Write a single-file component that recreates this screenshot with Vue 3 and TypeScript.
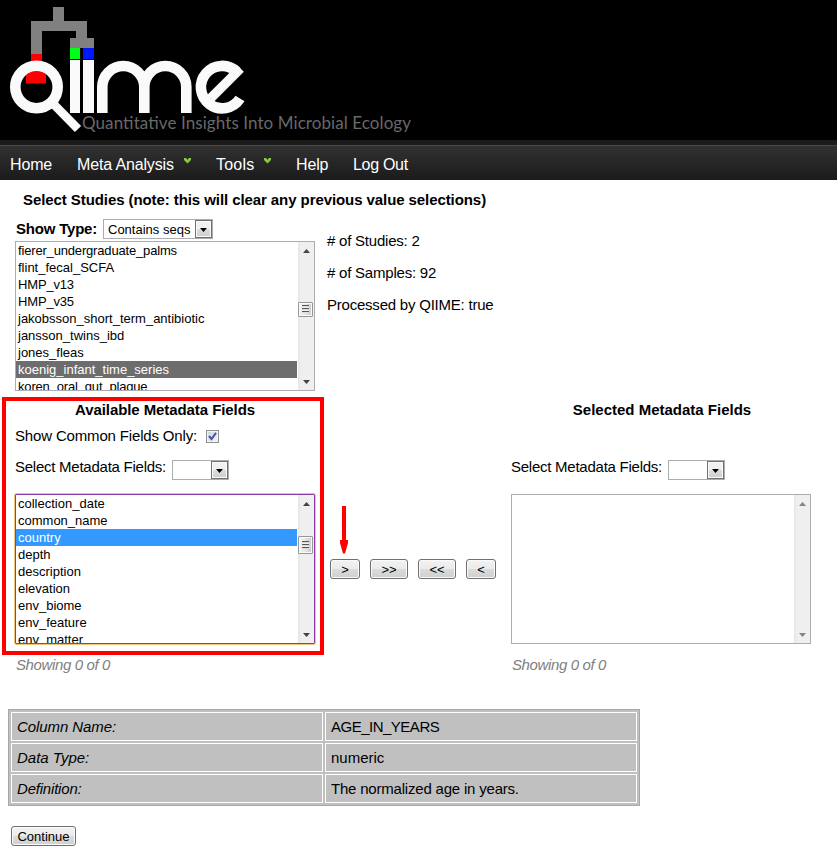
<script setup lang="ts">
import { ref } from 'vue'

interface NavItem { label: string; menu: boolean; name: string }
interface TransferButton { label: string; name: string }
interface DetailRow { label: string; value: string; name: string }

const nav: NavItem[] = [
  { label: 'Home', menu: false, name: 'home' },
  { label: 'Meta Analysis', menu: true, name: 'meta' },
  { label: 'Tools', menu: true, name: 'tools' },
  { label: 'Help', menu: false, name: 'help' },
  { label: 'Log Out', menu: false, name: 'logout' },
]

const studies: string[] = [
  'fierer_undergraduate_palms',
  'flint_fecal_SCFA',
  'HMP_v13',
  'HMP_v35',
  'jakobsson_short_term_antibiotic',
  'jansson_twins_ibd',
  'jones_fleas',
  'koenig_infant_time_series',
  'koren_oral_gut_plaque',
]
const tightNames = new Set<string>(['fierer_undergraduate_palms', 'HMP_v13', 'HMP_v35', 'koren_oral_gut_plaque'])
const fields: string[] = [
  'collection_date',
  'common_name',
  'country',
  'depth',
  'description',
  'elevation',
  'env_biome',
  'env_feature',
  'env_matter',
]
const study = ref('koenig_infant_time_series')
const field = ref('country')
const commonOnly = ref(true)

const transfers: TransferButton[] = [
  { label: '>', name: 'single' },
  { label: '>>', name: 'double' },
  { label: '<<', name: 'double' },
  { label: '<', name: 'single' },
]

const details: DetailRow[] = [
  { label: 'Column Name:', value: 'AGE_IN_YEARS', name: 'column' },
  { label: 'Data Type:', value: 'numeric', name: 'type' },
  { label: 'Definition:', value: 'The normalized age in years.', name: 'definition' },
]
</script>

<template>
  <div class="page">
    <header class="banner">
      <svg class="logo" width="430" height="140" viewBox="0 0 430 140">
        <g fill="#808080">
          <rect x="53" y="7" width="11" height="15" />
          <path d="M31 21H87V38H94V48H70V38H76V31H42V55H31Z" />
        </g>
        <rect x="31" y="54" width="11" height="8" fill="#f00" />
        <rect x="26" y="67" width="20" height="16.500" fill="#f00" />
        <rect x="70" y="48" width="10" height="11" fill="#00ff18" />
        <rect x="83" y="48" width="11" height="11" fill="#0018ff" />
        <g fill="none" stroke="#fafafa" stroke-width="10.6">
          <circle cx="36.5" cy="87" r="21.2" />
          <path d="M51 101.500L78 129" stroke-width="8.800" />
          <path d="M102.300 113V87A21 21 0 0 1 144.300 87V113M144.300 87A21 21 0 0 1 186.300 87V113" />
          <path d="M237 72A21.200 21.200 0 1 0 240 98.500" />
          <path d="M210.500 98.300L240.500 68.500" stroke-width="9.500" />
        </g>
        <g fill="#fafafa">
          <rect x="70" y="60" width="10" height="53" />
          <rect x="83" y="60" width="11" height="53" />
        </g>
        <text class="tagline" x="82" y="129" textLength="329">Quantitative Insights Into Microbial Ecology</text>
      </svg>
    </header>
    <nav class="nav">
      <a v-for="item in nav" :key="item.name" class="nav-item" :class="item.name">
        <span class="nav-label">{{ item.label }}</span>
        <svg v-if="item.menu" class="chevron" width="7" height="6" viewBox="0 0 7 6">
          <path d="M0 0H2L3.500 1.700L5 0H7V2L3.500 5.500L0 2Z" fill="#8cc63a" />
        </svg>
      </a>
    </nav>

    <main>
      <h2 class="heading">Select Studies (note: this will clear any previous value selections)</h2>
      <section class="studies">
        <div class="picker">
          <div class="type-row">
            <strong class="type-label">Show Type:</strong>
            <div class="combo wide"><span>Contains seqs</span><i class="drop"></i></div>
          </div>
          <div class="listbox">
            <ul class="options">
              <li
                v-for="name in studies"
                :key="name"
                :class="{ inactive: name === study, tight: tightNames.has(name) }"
                @click="study = name"
              >{{ name }}</li>
            </ul>
            <div class="scroll"><i class="up"></i><i class="thumb high"></i><i class="down"></i></div>
          </div>
        </div>
        <div class="facts">
          <p># of Studies: 2</p>
          <p># of Samples: 92</p>
          <p>Processed by QIIME: true</p>
        </div>
      </section>

      <section class="metadata">
        <div class="available">
          <h3>Available Metadata Fields</h3>
          <div class="check-row" @click="commonOnly = !commonOnly">
            <span class="check-label">Show Common Fields Only:</span>
            <span class="check">
              <svg v-if="commonOnly" width="9" height="9" viewBox="0 0 9 9">
                <path d="M1 4L3.500 7L8 0.800" fill="none" stroke="#4258a0" stroke-width="2" />
              </svg>
            </span>
          </div>
          <div class="field-row">
            <span class="field-label">Select Metadata Fields:</span>
            <div class="combo"><span></span><i class="drop"></i></div>
          </div>
          <div class="listbox focused">
            <ul class="options">
              <li v-for="name in fields" :key="name" :class="{ active: name === field }" @click="field = name">{{ name }}</li>
            </ul>
            <div class="scroll"><i class="up"></i><i class="thumb low"></i><i class="down"></i></div>
          </div>
        </div>
        <div class="transfer">
          <svg class="arrow" width="8" height="48" viewBox="0 0 8 48">
            <path d="M2 0H6V34H8V37L5 47.500H3L0 37V34H2Z" fill="#f00" />
          </svg>
          <div class="buttons">
            <button v-for="b in transfers" :key="b.label" type="button" class="btn" :class="b.name">{{ b.label }}</button>
          </div>
        </div>
        <div class="selected">
          <h3>Selected Metadata Fields</h3>
          <div class="field-row">
            <span class="field-label">Select Metadata Fields:</span>
            <div class="combo"><span></span><i class="drop"></i></div>
          </div>
          <div class="listbox">
            <ul class="options"></ul>
            <div class="scroll faded"><i class="up"></i><i class="down"></i></div>
          </div>
        </div>
      </section>
      <div class="counts">
        <em>Showing 0 of 0</em>
        <em>Showing 0 of 0</em>
      </div>

      <div class="details">
        <template v-for="row in details" :key="row.name">
          <div class="cell"><em :class="row.name">{{ row.label }}</em></div>
          <div class="cell"><span :class="row.name">{{ row.value }}</span></div>
        </template>
      </div>
      <button type="button" class="btn continue">Continue</button>
    </main>
  </div>
</template>

<style>
body {
  margin: 0;
  background: #fff;
}
</style>

<style scoped>
.page {
  width: 837px;
  height: 858px;
  overflow: hidden;
  font: 15px/20px 'Liberation Sans', Arial, sans-serif;
  color: #000;
  background: #fff;
}
.page * { box-sizing: border-box; }
.banner { height: 140px; background: #000; }
.logo { display: block; }
.tagline { font: 17px Lato, sans-serif; fill: #686868; }
.nav {
  display: flex;
  height: 40px;
  padding: 10px 0 0 10px;
  border-top: 5px solid #1b1b1b;
  box-shadow: inset 0 1px #484848;
  background: linear-gradient(#323232, #1b1b1b);
  font-size: 16px;
  color: #fff;
}
.nav-item { display: flex; white-space: nowrap; }
.nav-label { letter-spacing: -0.15px; }
.home { width: 67px; }
.meta { width: 139px; }
.meta .nav-label { width: 107px; }
.tools { width: 80px; }
.tools .nav-label { width: 48px; letter-spacing: 0.2px; }
.help { width: 57px; }
.logout .nav-label { letter-spacing: -0.3px; }
.chevron { margin-top: 3px; }
h2, h3, p, ul { margin: 0; padding: 0; }
.heading {
  height: 39px;
  padding: 10px 0 0 23px;
  font-size: 15px;
  line-height: 20px;
  letter-spacing: -0.08px;
  white-space: nowrap;
}
.studies { display: flex; height: 178px; padding-left: 15px; }
.picker { width: 300px; }
.type-row { display: flex; height: 22px; gap: 6px; padding-left: 1px; }
.type-label { width: 81px; letter-spacing: -0.2px; white-space: nowrap; }
.combo {
  display: flex;
  justify-content: space-between;
  width: 57px;
  height: 20px;
  border: 1px solid #abadb3;
  background: #fff;
}
.combo.wide { width: 110px; }
.combo span { padding-left: 4px; font-size: 13px; line-height: 19px; white-space: nowrap; }
.drop {
  display: flex;
  justify-content: center;
  width: 17px;
  height: 18px;
  border: 1px solid #707070;
  box-shadow: inset 0 0 0 1px #fafafa;
  background: linear-gradient(#f0f0f0 48%, #dcdcdc 52%, #cfcfcf);
}
.drop::after {
  content: '';
  width: 7px;
  height: 4px;
  margin-top: 7px;
  background: #000;
  clip-path: polygon(0 0, 100% 0, 50% 100%);
}
.listbox { display: flex; width: 300px; height: 150px; border: 1px solid #abadb3; background: #fff; }
.listbox.focused { border-color: #8a3ba6; outline: 1px solid #f1c578; border-radius: 1px; }
.options { flex: 1; overflow: hidden; list-style: none; font-size: 13px; }
.options li { height: 17px; padding-left: 2px; line-height: 17px; white-space: nowrap; }
.options .tight { letter-spacing: -0.17px; }
.options .inactive { color: #fff; background: #6d6d6d; }
.options .active { color: #fff; background: #3399ff; }
.scroll {
  position: relative;
  width: 17px;
  background: linear-gradient(90deg, #fff 1px, #e5e5e5 1px, #efefef 4px, #f0f0f0);
}
.up, .down { position: absolute; left: 6px; width: 7px; height: 4px; background: #444; }
.up { top: 7px; clip-path: polygon(50% 0, 100% 100%, 0 100%); }
.down { bottom: 6px; clip-path: polygon(0 0, 100% 0, 50% 100%); }
.faded .up, .faded .down { background: #848484; }
.thumb {
  position: absolute;
  left: 0;
  width: 15px;
  border: 1px solid #979797;
  border-radius: 1px;
  box-shadow: inset 0 0 0 1px #fafafa;
  background: linear-gradient(90deg, #f4f4f4, #e6e6e6 50%, #c8c8c8);
}
.thumb::after {
  content: '';
  display: block;
  width: 7px;
  height: 8px;
  margin: 2px 0 0 3px;
  background: repeating-linear-gradient(#555 0 1px, #ddd 1px 2px, #eee 2px 3px);
}
.thumb.high { top: 60px; height: 15px; }
.thumb.low { top: 41px; height: 18px; }
.thumb.low::after { margin-top: 4px; }
.thumb { left: 1px; }
.facts { padding: 6px 0 0 12px; line-height: 32px; letter-spacing: -0.22px; white-space: nowrap; }
.metadata { display: flex; height: 258px; padding-left: 2px; }
.available { width: 322px; height: 258px; border: 4px solid #f00; padding-left: 9px; }
.available h3 { width: 300px; height: 26px; line-height: 18px; }
h3 { font-size: 15px; letter-spacing: -0.08px; text-align: center; white-space: nowrap; }
.check-row { display: flex; height: 33px; }
.check-label { width: 191px; line-height: 18px; letter-spacing: -0.16px; white-space: nowrap; }
.check {
  width: 13px;
  height: 13px;
  margin-top: 3px;
  border: 1px solid #8e8f8f;
  background: linear-gradient(135deg, #cfd5dc, #f6f6f6);
  box-shadow: inset 0 0 0 1px #f4f4f4;
}
.check svg { display: block; margin: 1px; }
.field-row { display: flex; height: 34px; }
.field-label { width: 157px; line-height: 14px; letter-spacing: -0.25px; white-space: nowrap; }
.transfer { width: 187px; padding: 109px 0 0 6px; }
.arrow { display: block; margin-left: 10px; }
.buttons { display: flex; gap: 10px; margin-top: 5px; }
.btn {
  width: 30px;
  height: 20px;
  padding: 1px 0 0;
  border: 1px solid #707070;
  border-radius: 3px;
  box-shadow: inset 0 0 0 1px #fafafa;
  background: linear-gradient(#f2f2f2, #ebebeb 49%, #dcdcdc 50%, #cfcfcf);
  font: 13px/17px 'Liberation Sans', Arial, sans-serif;
  color: #000;
}
.btn.double { width: 38px; }
.selected { padding-top: 4px; }
.selected h3 { height: 59px; padding-left: 2px; line-height: 18px; letter-spacing: 0; }
.counts { display: flex; height: 54px; padding-left: 16px; color: #808080; }
.counts em { flex: none; width: 496px; letter-spacing: -0.38px; white-space: nowrap; }
.details {
  display: grid;
  grid-template-columns: 312px 312px;
  gap: 2px;
  width: 632px;
  margin-left: 8px;
  padding: 2px;
  border: 1px solid #a5a9ab;
  background: #c0c0c0;
}
.cell { height: 29px; padding-left: 5px; border: 1px solid #fff; line-height: 28px; white-space: nowrap; }
.cell em.column { letter-spacing: -0.08px; }
.cell span.column { letter-spacing: -0.5px; }
.cell .definition { letter-spacing: -0.2px; }
.btn.continue { display: block; width: 65px; margin: 20px 0 0 11px; }
</style>
